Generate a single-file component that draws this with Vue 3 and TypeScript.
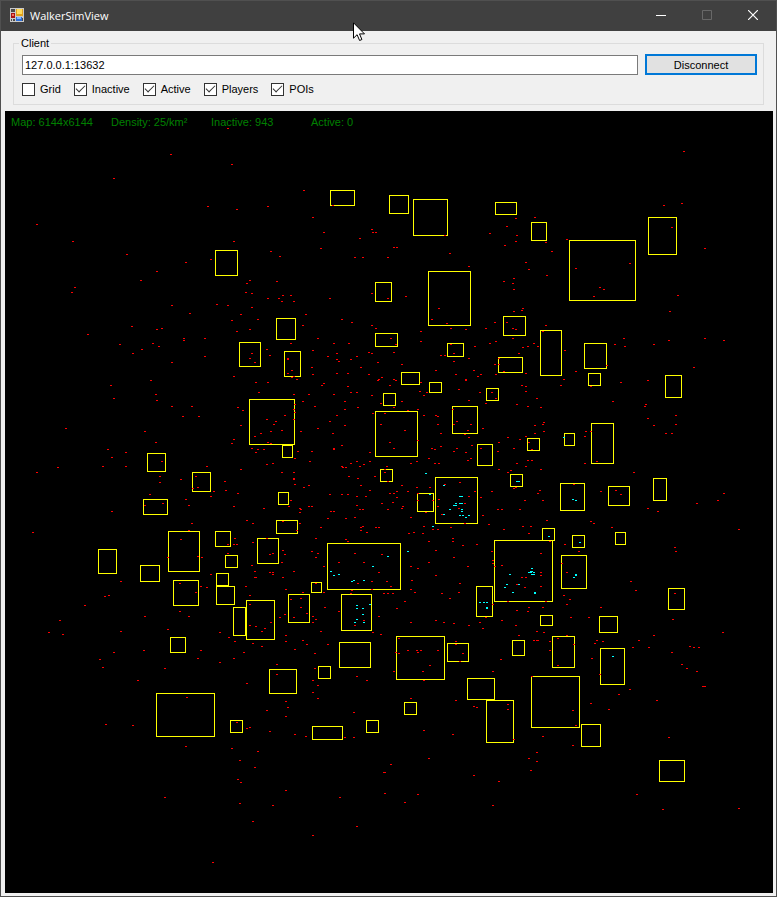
<script setup lang="ts">
import { ref, computed } from 'vue'

type Box = [number, number, number, number]
interface Sector { x: number; y: number; dots: string }

const address = ref('127.0.0.1:13632')
const showGrid = ref(false)
const showInactive = ref(true)
const showActive = ref(true)
const showPlayers = ref(true)
const showPois = ref(true)

const stats: string[] = ['Map: 6144x6144', 'Density: 25/km²', 'Inactive: 943', 'Active: 0']

// Points of interest: left, top, width, height in map pixels.
const pois: Box[] = [
  [215, 250, 22, 25], [239, 342, 21, 24], [330, 190, 24, 15], [389, 195, 19, 18], [413, 199, 34, 36],
  [495, 202, 21, 12], [428, 271, 42, 54], [375, 282, 16, 19], [276, 318, 19, 21], [375, 333, 22, 13],
  [284, 351, 16, 25], [447, 343, 16, 13], [503, 316, 22, 19], [498, 357, 24, 15], [401, 372, 18, 12],
  [429, 382, 12, 10], [486, 388, 12, 12], [531, 222, 15, 18], [569, 240, 66, 60], [648, 217, 28, 37],
  [540, 330, 21, 45], [584, 343, 22, 25], [588, 373, 12, 12], [665, 375, 16, 22], [249, 399, 45, 45],
  [147, 453, 18, 18], [192, 472, 18, 19], [143, 499, 24, 15], [168, 531, 31, 40], [215, 531, 15, 15],
  [225, 555, 12, 12], [257, 538, 21, 25], [98, 549, 18, 24], [140, 565, 19, 16], [173, 580, 25, 25],
  [216, 573, 12, 12], [216, 586, 18, 18], [233, 607, 12, 28], [246, 600, 28, 39], [170, 637, 15, 15],
  [383, 393, 12, 12], [375, 411, 42, 45], [452, 406, 25, 27], [477, 444, 15, 21], [282, 445, 10, 12],
  [380, 469, 12, 12], [435, 477, 42, 46], [417, 493, 16, 18], [510, 474, 12, 12], [278, 492, 10, 12],
  [276, 520, 21, 13], [327, 543, 73, 46], [311, 582, 10, 10], [288, 594, 21, 28], [341, 594, 30, 36],
  [476, 586, 16, 30], [494, 540, 58, 61], [396, 636, 48, 43], [339, 642, 31, 25], [447, 643, 21, 18],
  [512, 640, 12, 15], [527, 438, 12, 12], [564, 433, 10, 12], [591, 423, 22, 40], [560, 483, 24, 27],
  [608, 486, 21, 19], [653, 478, 13, 22], [542, 528, 12, 12], [572, 535, 12, 12], [615, 532, 10, 12],
  [561, 555, 25, 33], [668, 588, 16, 21], [540, 615, 12, 10], [599, 616, 18, 16], [552, 636, 22, 31],
  [156, 693, 58, 43], [230, 720, 12, 12], [269, 669, 27, 24], [318, 666, 12, 12], [312, 726, 30, 13],
  [366, 720, 12, 12], [404, 702, 12, 12], [467, 678, 27, 21], [486, 700, 27, 42], [531, 676, 48, 51],
  [600, 648, 24, 36], [581, 724, 19, 22], [659, 760, 25, 21],
]

// Walker centres per sector, as "x,y" in units of a third of a map pixel from the sector's corner.
const UNITS = 3

const inactive: Sector[] = [
  { x: 5, y: 111, dots: '669,52' },
  { x: 5, y: 130, dots: `498,73 681,103 327,145 609,229 696,238 96,283 204,334 687,334 366,373 618,388 543,397 456,424
    408,451 735,451 726,460 210,472 201,487 723,487 741,490 501,526 636,523 669,526 741,532 555,550 708,553 681,571
    759,568 381,589 456,598 471,595 696,604 735,598 249,613 537,625 537,631 600,625 345,643 444,640 462,649 411,658
    384,670 600,679 501,697 741,670 735,685 750,697 687,739 438,751 318,766 753,757` },
  { x: 260, y: 130, dots: `132,181 24,229 219,226 159,262 192,307 336,298 339,307 348,307 300,325 183,355 33,364 60,379
    285,382 309,382 384,382 402,352 411,352 555,316 570,370 627,409 690,310 741,289 768,265 771,316 768,334 735,346
    51,454 69,496 93,496 24,505 57,505 66,514 102,514 210,505 336,490 384,505 438,499 138,553 129,586 246,568 276,577
    336,586 348,595 537,535 516,568 561,580 573,595 618,598 483,604 483,634 678,595 705,577 741,577 759,595 768,598
    732,454 762,445 759,460 762,478 762,544 759,625 690,640 708,634 174,625 93,640 222,640 267,640 21,658 30,676
    159,661 204,679 231,670 231,688 237,694 273,688 291,679 327,667 336,670 402,667 393,625 408,643 354,697 426,703
    303,712 156,712 159,733 84,685 84,688 96,721 84,730 96,742 102,739 111,748 231,730 264,730 327,733 24,757
    186,766 192,760 264,769 366,742 357,748 354,751 402,748 408,751 390,766 483,757 528,721 543,676 555,676 573,643
    582,670 582,694 645,649 627,685 588,733 618,748 618,751 642,721 663,733 654,739 708,733 705,703 717,703 717,685
    732,724 777,670 597,778` },
  { x: 515, y: 130, dots: `507,64 501,220 447,226 60,262 3,265 471,292 6,316 3,334 93,337 156,328 111,364 570,355 33,397
    42,418 96,436 183,415 345,400 255,472 267,478 237,499 489,496 465,544 24,535 21,541 93,586 84,604 3,598 327,625
    300,643 330,649 417,643 462,631 570,625 627,631 57,640 69,649 39,649 24,652 12,670 150,661 276,706 537,712
    183,724 33,730 147,748 138,766 21,766 33,769 228,769 318,757 399,751` },
  { x: 5, y: 385, dots: `318,1 453,28 327,40 456,46 762,22 501,64 561,64 699,67 714,76 534,94 582,94 708,121 183,130 420,139
    768,145 750,154 453,172 687,163 681,175 309,193 363,202 741,190 759,193 777,193 753,202 321,217 471,229 294,244
    363,244 159,247 96,262 606,244 708,253 465,274 465,292 528,283 573,274 660,289 579,307 564,310 627,319 663,316
    618,334 699,325 435,328 543,343 474,355 420,361 552,361 687,364 777,370 321,379 726,406 744,415 561,415 84,442
    552,436 528,463 690,460 669,478 687,478 696,478 744,472 669,505 489,517 579,514 591,517 741,541 750,559 750,577
    753,577 618,568 348,589 525,595 588,604 606,607 723,604 573,622 735,631 300,634 312,631 240,661 735,658 525,679
    420,694 552,694 165,706 735,721 753,724 489,733 132,742 174,748 348,739 645,742 771,739 780,730 672,757 690,769
    744,775` },
  { x: 260, y: 385, dots: `186,1 264,4 390,1 102,28 147,28 222,28 273,22 291,22 336,31 480,19 501,22 492,31 597,13 660,22
    696,22 708,40 129,49 255,49 363,55 426,49 402,67 627,46 678,55 771,58 105,58 102,73 105,82 165,64 294,67 255,73
    444,76 474,73 579,73 339,85 375,85 75,91 231,91 492,91 528,91 534,94 21,103 102,103 48,109 210,109 591,109 42,118
    255,121 363,118 534,118 582,118 633,118 33,139 66,136 123,139 174,130 435,136 624,136 669,130 3,145 219,145 543,145
    615,148 627,157 744,157 780,163 24,172 33,175 390,172 474,166 717,172 246,181 12,193 222,190 222,193 114,199
    156,199 330,202 402,190 516,190 525,193 543,184 591,190 636,181 663,190 762,190 582,199 618,202 714,199 105,220
    150,229 291,229 330,229 507,220 624,226 633,220 21,238 39,235 273,235 312,238 471,229 453,235 525,235 537,235
    771,235 246,244 249,247 258,247 300,244 381,244 375,253 375,262 66,262 102,262 753,256 744,262 717,253 102,280
    102,283 267,274 294,280 345,274 384,289 105,298 147,301 132,307 303,301 426,301 555,298 600,292 471,307 510,307
    768,307 762,310 330,316 411,319 444,319 474,325 645,319 696,319 210,328 246,328 264,328 318,334 291,334 390,325
    402,325 411,337 93,346 474,346 519,346 537,343 627,334 663,337 366,355 399,352 615,355 87,364 147,364 156,364
    291,361 429,364 426,370 534,364 12,370 120,370 123,373 120,382 213,379 222,379 300,373 309,373 384,373 597,370
    498,382 714,373 726,373 546,388 669,391 204,400 258,400 285,397 453,397 69,409 120,415 615,415 687,418 183,427
    303,427 309,424 303,436 348,427 357,427 492,424 519,433 534,433 573,427 732,433 111,436 321,442 447,445 462,442
    489,445 21,460 168,460 258,463 264,469 507,469 579,460 579,469 609,481 651,478 69,496 39,505 30,508 75,508 156,499
    174,505 168,517 285,505 366,508 528,496 582,517 696,499 699,526 699,535 66,532 237,532 312,532 507,532 192,544
    453,544 474,550 624,544 705,544 726,541 30,562 39,562 39,568 102,559 357,562 69,577 528,571 336,589 381,589 456,586
    294,595 168,595 393,604 600,595 771,598 78,613 129,622 192,622 276,616 273,625 336,613 372,625 384,625 399,625
    453,613 465,622 546,625 597,622 93,643 123,640 435,649 570,640 744,649 123,667 195,667 237,679 411,670 699,658
    771,676 75,688 141,685 60,697 102,697 159,694 168,703 159,712 357,694 678,697 33,712 312,706 285,721 453,712 528,706
    552,712 582,715 627,721 660,712 726,706 768,721 669,730 15,730 6,739 183,739 339,742 363,748 78,751 78,769 129,766
    417,760 588,769 777,751 141,778 204,778` },
  { x: 515, y: 385, dots: `21,1 33,4 33,19 138,1 228,4 66,40 294,49 6,58 39,64 78,67 393,58 390,64 399,100 483,91 417,121
    483,118 453,145 471,145 60,121 87,112 84,118 87,139 60,145 33,154 15,163 42,172 51,193 213,139 228,139 210,154
    39,226 51,226 6,235 33,244 78,253 210,235 246,229 357,262 177,298 3,307 75,316 69,325 258,319 303,316 318,328
    30,346 84,346 15,373 627,325 609,346 546,355 399,370 429,379 96,406 24,424 48,424 42,445 228,409 237,415 291,427
    672,433 105,469 150,478 192,499 78,505 480,487 483,499 141,535 78,562 78,571 156,562 21,577 33,577 6,598 30,607
    78,604 348,589 363,616 480,625 147,631 165,643 93,649 156,658 42,667 84,667 39,679 6,676 258,667 168,697 222,697
    474,703 3,721 66,739 87,742 12,751 156,751 417,751 624,742 57,766 66,766 69,766 105,769 129,760 177,778 246,766
    240,775 264,769 372,766` },
  { x: 5, y: 640, dots: `690,4 744,10 771,19 417,31 327,37 588,31 717,37 285,58 579,55 687,55 645,67 294,82 480,85 399,121
    726,130 546,172 303,253 384,256 696,247 726,265 735,262 543,319 681,325 759,334 705,361 750,382 699,418 708,427
    480,472 705,490 744,544 624,667` },
  { x: 260, y: 640, dots: `78,4 129,1 141,13 204,13 6,19 105,28 165,40 51,73 165,85 51,103 159,121 174,136 159,157 174,175
    291,109 321,121 78,184 84,202 21,211 78,229 30,274 105,283 138,289 282,217 255,292 282,292 588,4 588,13 444,31
    471,31 483,31 474,37 534,31 408,37 417,40 609,40 600,64 723,58 510,76 402,94 489,94 699,94 492,121 453,175 588,181
    642,199 651,202 744,193 744,208 492,271 579,283 762,298 507,355 393,373 372,397 375,397 642,406 717,424 78,451
    240,472 39,496 375,460 474,463 435,487 699,496 291,559 159,586` },
  { x: 515, y: 640, dots: `57,1 66,1 69,1 246,1 372,1 105,4 240,10 264,4 177,13 354,22 402,22 525,19 537,22 552,22 471,37
    105,31 231,55 129,76 501,73 516,85 546,94 255,103 51,109 564,139 570,139 345,148 312,163 426,181 228,190 282,208
    174,211 183,256 84,289 462,292 174,316 66,337 42,355 66,364 48,391 366,463 444,508 672,505` },
]

const active: Sector[] = [
  { x: 260, y: 385, dots: `498,265 552,301 510,328 600,334 606,334 588,355 600,355 606,355 582,361 588,361 570,373 606,373
    606,379 552,388 600,391 609,391 627,391 618,397 519,424 771,289 777,289 444,499 384,514 339,544 213,559 222,571
    237,568 282,586 276,589 312,586 291,661 330,658 291,670 309,670 309,688 291,703 285,712 312,712 750,568 741,598
    735,607 777,598 759,622 660,652 672,652 681,652 681,667 681,670` },
  { x: 515, y: 385, dots: `147,157 6,289 12,289 174,343 183,346 102,454 195,472 51,550 48,559 51,559 42,562 48,562 57,562
    51,568 57,568 12,598 60,622 60,625 183,568 183,571 177,577` },
  { x: 515, y: 640, dots: '294,49' },
]

function dotPath(sectors: Sector[]): string {
  return sectors
    .flatMap((s) =>
      s.dots.trim().split(/\s+/).map((pair) => {
        const [cx, cy] = pair.split(',').map(Number)
        return `M${s.x + Math.round(cx / UNITS) - 1} ${s.y + Math.floor(cy / UNITS)}h2v1h-2z`
      }),
    )
    .join('')
}

const inactivePath = computed(() => dotPath(inactive))
const activePath = computed(() => dotPath(active))
</script>

<template>
  <main class="window">
    <header class="titlebar">
      <svg class="app-icon" viewBox="0 0 14 14" aria-hidden="true">
        <rect width="14" height="14" fill="#c9c9c9" />
        <path d="M1 1h4v3H1zM1 11h1v2H1zM3 11h2v2H3zM12 10h1v3h-1z" fill="#4a4a4a" />
        <rect x="6" y="1" width="7" height="7" fill="#e0a21b" />
        <rect x="7" y="1" width="5" height="5" fill="#ffdc5e" />
        <rect x="1" y="5" width="4" height="5" fill="#a81313" />
        <rect x="2" y="6" width="2" height="2" fill="#f2735f" />
        <rect x="6" y="9" width="6" height="4" fill="#2d6fd8" />
        <rect x="7" y="9" width="4" height="2" fill="#82b7ff" />
      </svg>
      <h1 class="title">WalkerSimView</h1>
      <div class="window-buttons">
        <button type="button" aria-label="Minimize">
          <svg viewBox="0 0 10 10"><path d="M0 5h10v1H0z" fill="#fff" /></svg>
        </button>
        <button type="button" aria-label="Maximize" disabled>
          <svg viewBox="0 0 10 10"><path d="M.5 .5h9v9h-9z" fill="none" stroke="#686868" /></svg>
        </button>
        <button type="button" aria-label="Close">
          <svg viewBox="0 0 10 10"><path d="M0 0l10 10M10 0L0 10" fill="none" stroke="#fff" stroke-width="1.2" /></svg>
        </button>
      </div>
      <svg class="pointer" viewBox="0 0 12 19" aria-hidden="true">
        <path d="M.5 .8v15.4l3.6-3.5 2.5 5.8 2.3-1-2.4-5.6h5z" fill="#fff" stroke="#000" stroke-width="1" />
      </svg>
    </header>

    <div class="client-area">
      <fieldset class="client">
        <legend>Client</legend>
        <div class="connection">
          <input v-model="address" class="address" type="text" aria-label="Server address" />
          <button class="connect" type="button">Disconnect</button>
        </div>
        <div class="filters">
          <label><input v-model="showGrid" type="checkbox" />Grid</label>
          <label><input v-model="showInactive" type="checkbox" />Inactive</label>
          <label><input v-model="showActive" type="checkbox" />Active</label>
          <label><input v-model="showPlayers" type="checkbox" />Players</label>
          <label><input v-model="showPois" type="checkbox" />POIs</label>
        </div>
      </fieldset>

      <section class="map" aria-label="Map">
        <svg class="plot" viewBox="5 111 768 782" shape-rendering="crispEdges">
          <g v-if="showPois" transform="translate(.5 .5)" fill="none" stroke="#ff0">
            <rect v-for="(b, i) in pois" :key="i" :x="b[0]" :y="b[1]" :width="b[2]" :height="b[3]" />
          </g>
          <path v-if="showInactive" :d="inactivePath" fill="#f00" />
          <path v-if="showPlayers" :d="activePath" fill="#0ff" />
        </svg>
        <div class="stats">
          <span v-for="s in stats" :key="s">{{ s }}</span>
        </div>
      </section>
    </div>
  </main>
</template>

<style>
body {
  margin: 0;
  background: #f0f0f0;
}
</style>

<style scoped>
.window {
  box-sizing: border-box;
  min-height: 100vh;
  border: 1px solid #505050;
  background: #f0f0f0;
  color: #000;
  font: 11px/14px "Liberation Sans", Arial, sans-serif;
}
.titlebar {
  position: relative;
  display: flex;
  align-items: center;
  height: 30px;
  padding-left: 9px;
  background: #404040;
  color: #fff;
}
.app-icon {
  width: 14px;
  height: 14px;
  margin-bottom: 2px;
  shape-rendering: crispEdges;
}
.title {
  flex: 1;
  margin: 0 0 0 6px;
  font: 11px/16px "Open Sans", "Noto Sans", sans-serif;
}
.window-buttons {
  display: flex;
  height: 100%;
}
.window-buttons button {
  display: grid;
  place-items: center;
  width: 46px;
  padding: 0 0 2px;
  border: 0;
  background: none;
}
.window-buttons svg {
  width: 10px;
  height: 10px;
}
.pointer {
  position: absolute;
  left: 352px;
  top: 21px;
  width: 12px;
  height: 19px;
  z-index: 1;
}
.client-area {
  padding: 7px 3px 3px 4px;
}
.client {
  min-width: 0;
  margin: 0 9px 6px 8px;
  padding: 5px 6px 8px 8px;
  border: 1px solid #dcdcdc;
}
.client legend {
  margin-left: -3px;
  padding: 0 2px;
  line-height: 11px;
}
.connection {
  display: flex;
  align-items: flex-end;
  gap: 7px;
}
.address {
  box-sizing: border-box;
  flex: 1;
  min-width: 0;
  height: 20px;
  padding: 0 2px;
  border: 1px solid #7a7a7a;
  border-radius: 0;
  background: #fff;
  color: #000;
  font: inherit;
  outline: 0;
}
.connect {
  box-sizing: border-box;
  width: 112px;
  height: 21px;
  padding: 0;
  border: 2px solid #0078d7;
  background: #e1e1e1;
  color: #000;
  font: inherit;
}
.filters {
  display: flex;
  flex-wrap: wrap;
  gap: 13px;
  margin-top: 7px;
}
.filters label {
  display: flex;
  align-items: center;
  gap: 5px;
}
.filters input {
  appearance: none;
  box-sizing: border-box;
  display: grid;
  place-items: center;
  width: 13px;
  height: 13px;
  margin: 0;
  border: 1px solid #333;
  background: #fff;
}
.filters input:checked::after {
  content: "";
  box-sizing: border-box;
  width: 9px;
  height: 5px;
  margin-bottom: 3px;
  border: solid #333;
  border-width: 0 0 1px 1px;
  rotate: -45deg;
}
.map {
  position: relative;
  background: #000;
}
.plot {
  display: block;
  width: 100%;
  height: auto;
}
.stats {
  position: absolute;
  top: 4px;
  left: 6px;
  display: grid;
  grid-template-columns: repeat(4, 100px);
  color: #008000;
}
</style>
